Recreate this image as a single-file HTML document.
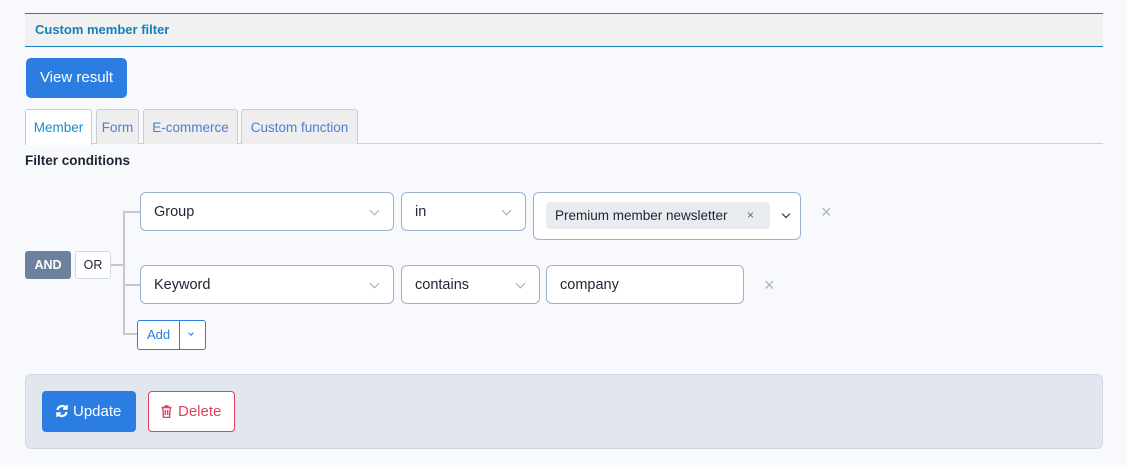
<!DOCTYPE html>
<html><head><style>
body{margin:0;width:1127px;height:465px;background:#f8f9fc;font-family:"Liberation Sans",sans-serif;position:relative;overflow:hidden;color:#1d2433}
div,span{position:absolute;box-sizing:border-box}
.hdr{left:25px;top:13px;width:1078px;height:34px;background:#f1f1f1;border-top:1px solid #1380b8;border-bottom:1px solid #1380b8}
.tab{top:109px;height:35px;border:1px solid #ccc;border-bottom:none;background:#eee;color:#4a7fd6;font-size:13.5px;line-height:36px;text-align:center;border-radius:3px 3px 0 0}
.sel{background:#fff;border:1px solid #9fb1d0;border-radius:6px;font-size:14.5px;line-height:39px;padding-left:13px;color:#1d2433}
.chev{position:absolute;right:15px;top:14px;width:6px;height:6px;border-right:1.2px solid #a0aac0;border-bottom:1.2px solid #a0aac0;transform:rotate(45deg)}
.ln{background:#c8c8c8}
.x{color:#aab4c8;font-size:18px}
</style></head><body>
<div class="hdr"><span style="left:10px;top:8px;font-size:13px;font-weight:bold;color:#1380b8">Custom member filter</span></div>
<div style="left:26px;top:58px;width:101px;height:40px;background:#2b7de1;border-radius:5px;color:#fff;font-size:15px;line-height:40px;text-align:center">View result</div>
<div style="left:25px;top:143px;width:1078px;height:1px;background:#d0d0d0"></div>
<div class="tab" style="left:25px;width:67px;background:#fff;color:#1a8cc8;height:36px">Member</div>
<div class="tab" style="left:96px;width:43px">Form</div>
<div class="tab" style="left:143px;width:95px">E-commerce</div>
<div class="tab" style="left:241px;width:117px">Custom function</div>
<div style="left:25px;top:153px;font-size:13.5px;font-weight:bold">Filter conditions</div>

<div style="left:25px;top:251px;width:46px;height:28px;background:#6d809e;border-radius:3px;color:#fff;font-size:12.5px;font-weight:bold;line-height:28px;text-align:center">AND</div>
<div style="left:75px;top:251px;width:36px;height:28px;background:#fff;border:1px solid #d0d8e4;border-radius:3px;font-size:12.5px;line-height:26px;text-align:center">OR</div>
<div class="ln" style="left:111px;top:264px;width:13px;height:2px"></div>
<div class="ln" style="left:123px;top:211px;width:2px;height:124px"></div>
<div class="ln" style="left:123px;top:211px;width:17px;height:2px"></div>
<div class="ln" style="left:123px;top:284px;width:17px;height:2px"></div>
<div class="ln" style="left:123px;top:333px;width:14px;height:2px"></div>

<div class="sel" style="left:140px;top:192px;width:254px;height:39px">Group<i class="chev"></i></div>
<div class="sel" style="left:401px;top:192px;width:125px;height:39px">in<i class="chev"></i></div>
<div class="sel" style="left:533px;top:192px;width:268px;height:48px">
<span style="left:12px;top:9px;width:224px;height:27px;background:#e8ebef;border-radius:4px;font-size:13.5px;line-height:27px;padding-left:9px">Premium member newsletter<span style="left:201px;top:0;color:#666;font-size:12px">×</span></span>
<span style="left:249px;top:18px;width:6px;height:6px;border-right:1.5px solid #1d2433;border-bottom:1.5px solid #1d2433;transform:rotate(45deg)"></span></div>
<span class="x" style="left:821px;top:202px">×</span>

<div class="sel" style="left:140px;top:265px;width:254px;height:39px">Keyword<i class="chev"></i></div>
<div class="sel" style="left:401px;top:265px;width:139px;height:39px">contains<i class="chev"></i></div>
<div class="sel" style="left:546px;top:265px;width:198px;height:39px">company</div>
<span class="x" style="left:764px;top:275px">×</span>

<div style="left:137px;top:320px;width:69px;height:30px;background:#fff;border:1px solid #2b7de1;border-radius:3px;color:#2b7de1;font-size:13px;line-height:28px"><span style="left:9px">Add</span><span style="left:41px;top:0;width:1px;height:28px;background:#2b7de1"></span><span style="left:51px;top:10px;width:4px;height:4px;border-right:1px solid #2b7de1;border-bottom:1px solid #2b7de1;transform:rotate(45deg)"></span></div>

<div style="left:25px;top:374px;width:1078px;height:75px;background:#e2e6ee;border:1px solid #cfd9e6;border-radius:6px"></div>
<div style="left:42px;top:391px;width:94px;height:41px;background:#2b7de1;border-radius:4px;color:#fff;font-size:15px;line-height:41px;padding-left:31px">Update
<svg style="position:absolute;left:13px;top:13px" width="14" height="14" viewBox="0 0 14 14" fill="none" stroke="#fff" stroke-width="2.2"><path d="M2.5 6A4.7 4.7 0 0 1 11 4"/><path d="M11.5 8A4.7 4.7 0 0 1 3 10"/><path d="M12 1v4H8" fill="#fff" stroke-width="1.5"/><path d="M2 13V9h4" fill="#fff" stroke-width="1.5"/></svg></div>
<div style="left:148px;top:391px;width:87px;height:41px;background:#fff;border:1px solid #e0405e;border-radius:4px;color:#e0405e;font-size:15px;line-height:39px;padding-left:29px">Delete
<svg style="position:absolute;left:12px;top:13px" width="11" height="13" viewBox="0 0 11 13" fill="none" stroke="#e0405e" stroke-width="1.4"><path d="M0.5 2.5h10M4 2.5V1h3v1.5M1.8 2.5l.7 10h6l.7-10M4.3 5v5M6.7 5v5"/></svg></div>
</body></html>
